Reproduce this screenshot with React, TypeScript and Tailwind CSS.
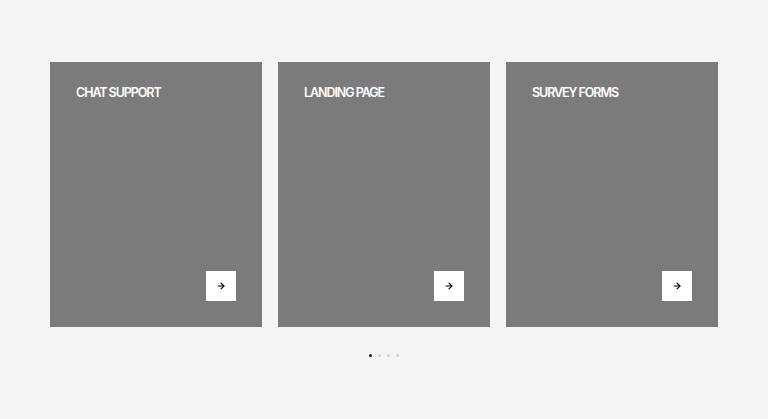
import React from 'react';
import { ArrowRight } from 'lucide-react';

const cards = ['CHAT SUPPORT', 'LANDING PAGE', 'SURVEY FORMS'];

export default function App() {
  return (
    <div className="flex min-h-[419px] w-full flex-col items-center bg-[#f5f5f5] pt-[62px] font-['Inter',sans-serif]">
      <div className="flex gap-4">
        {cards.map((title) => (
          <div
            key={title}
            className="flex h-[265px] w-[212px] flex-col justify-between bg-[#7b7b7c] px-[26px] pb-[26px] pt-[23px]"
          >
            <div className="text-[12.5px] font-semibold leading-[16px] tracking-[-0.085em] text-white">
              {title}
            </div>
            <div className="flex justify-end">
              <button className="flex h-[30px] w-[30px] items-center justify-center bg-white text-black">
                <ArrowRight size={10} strokeWidth={2.75} />
              </button>
            </div>
          </div>
        ))}
      </div>
      <div className="mt-[27px] flex gap-[6px]">
        <span className="h-[3px] w-[3px] rounded-full bg-[#1a1a1a]" />
        <span className="h-[3px] w-[3px] rounded-full bg-[#d4d4d4]" />
        <span className="h-[3px] w-[3px] rounded-full bg-[#d4d4d4]" />
        <span className="h-[3px] w-[3px] rounded-full bg-[#d4d4d4]" />
      </div>
    </div>
  );
}
